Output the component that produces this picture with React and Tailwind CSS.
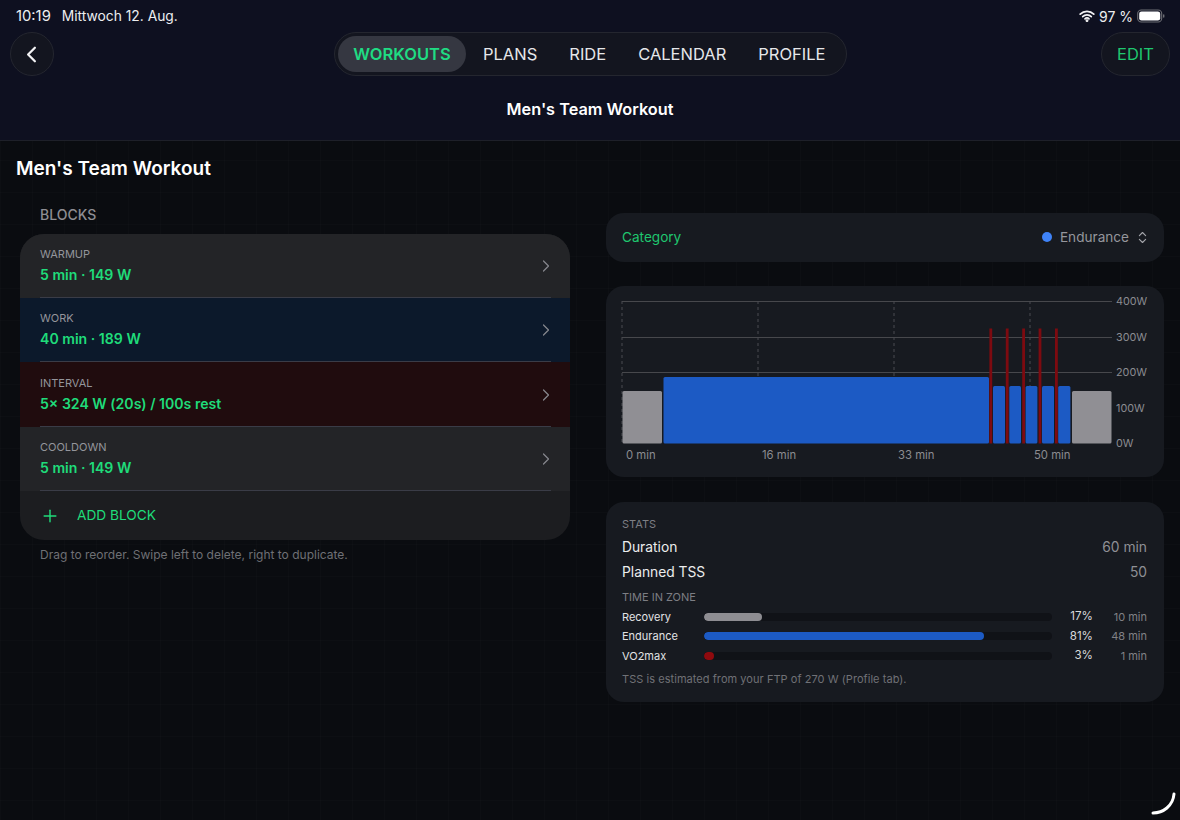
import React from "react";
import { ChevronLeft, ChevronRight, ChevronsUpDown, Plus } from "lucide-react";

const rows = [
  { label: "WARMUP", value: "5 min · 149 W", bg: "bg-[#232427]", h: "h-[64px]" },
  { label: "WORK", value: "40 min · 189 W", bg: "bg-[#0c192b]", h: "h-[64px]" },
  { label: "INTERVAL", value: "5× 324 W (20s) / 100s rest", bg: "bg-[#200c0e]", h: "h-[65px]" },
  { label: "COOLDOWN", value: "5 min · 149 W", bg: "bg-[#232427]", h: "h-[64px]" },
];

const tabs = ["WORKOUTS", "PLANS", "RIDE", "CALENDAR", "PROFILE"];

const zones = [
  { name: "Recovery", w: "w-[58px]", color: "bg-[#8e8d92]", pct: "17%", min: "10 min" },
  { name: "Endurance", w: "w-[280px]", color: "bg-[#1c5ac4]", pct: "81%", min: "48 min" },
  { name: "VO2max", w: "w-[10px]", color: "bg-[#8f0a0e]", pct: "3%", min: "1 min" },
];

function Chart() {
  const ox = 616;
  const oy = 292;
  const X = (x) => x - ox;
  const Y = (y) => y - oy;
  const blues = [[993, 1005], [1009.3, 1021], [1025.6, 1037.4], [1042, 1054], [1058.2, 1070.4]];
  const reds = [989.4, 1005.8, 1022.2, 1038.6, 1055];
  return (
    <svg width="548" height="176" viewBox="0 0 548 176" className="block">
      {[301, 337, 372].map((y) => (
        <line key={y} x1={X(622)} x2={X(1112)} y1={Y(y) + 0.5} y2={Y(y) + 0.5} stroke="#47484c" strokeWidth="1" />
      ))}
      {[622, 758, 894, 1030].map((x) => (
        <line key={x} x1={X(x)} x2={X(x)} y1={Y(301)} y2={Y(443)} stroke="#4a4b50" strokeWidth="1" strokeDasharray="3 3" />
      ))}
      <rect x={X(622.5)} y={Y(391)} width="39.5" height="52.5" rx="1.5" fill="#908f94" />
      <rect x={X(663.5)} y={Y(377)} width="325.5" height="66.5" rx="1.5" fill="#1c5ac4" />
      {blues.map(([a, b]) => (
        <rect key={a} x={X(a)} y={Y(386)} width={b - a} height="57.5" rx="1.5" fill="#1c5ac4" />
      ))}
      {reds.map((x) => (
        <rect key={x} x={X(x)} y={Y(328.5)} width="2.8" height="115" fill="#7d0a10" />
      ))}
      <rect x={X(1072)} y={Y(391)} width="39.5" height="52.5" rx="1.5" fill="#908f94" />
      {[["400W", 301], ["300W", 337], ["200W", 372], ["100W", 408], ["0W", 443]].map(([t, y]) => (
        <text key={t} x={X(1116)} y={Y(y) + 4} fontSize="10.8" fill="#8b8c91" fontFamily="Inter, sans-serif">{t}</text>
      ))}
      {[["0 min", 626], ["16 min", 762], ["33 min", 898], ["50 min", 1034]].map(([t, x]) => (
        <text key={t} x={X(x)} y={Y(458.5)} fontSize="11.3" fill="#8b8c91" fontFamily="Inter, sans-serif">{t}</text>
      ))}
    </svg>
  );
}

export default function App() {
  return (
    <div className="relative w-[1180px] h-[820px] overflow-hidden bg-[#0a0c10] font-['Inter',sans-serif] bg-[linear-gradient(rgba(255,255,255,0.012)_1px,transparent_1px),linear-gradient(90deg,rgba(255,255,255,0.012)_1px,transparent_1px)] bg-[size:32px_32px]">
      <header className="h-[141px] bg-[#0e1020] border-b border-[#1e2029] flex flex-col">
        <div className="h-[32px] flex items-center justify-between pl-[16px] pr-[15px] text-[#eceef0]">
          <div className="flex items-center gap-[11px]">
            <span className="text-[14.8px]">10:19</span>
            <span className="text-[13.8px]">Mittwoch 12. Aug.</span>
          </div>
          <div className="flex items-center gap-[4px] text-[14px]">
            <svg width="16" height="12" viewBox="0 0 16 12" fill="none" stroke="#f2f2f4" strokeWidth="1.7" strokeLinecap="round">
              <path d="M1.2 4.2a9.6 9.6 0 0 1 13.6 0" />
              <path d="M3.7 6.6a6 6 0 0 1 8.6 0" />
              <path d="M6 8.8a2.8 2.8 0 0 1 4 0" />
              <circle cx="8" cy="10.6" r="0.6" fill="#f2f2f4" />
            </svg>
            <span>97 %</span>
            <svg width="28" height="14" viewBox="0 0 28 14">
              <rect x="0.7" y="1" width="24" height="12" rx="3.6" fill="none" stroke="#6d6e74" strokeWidth="1.1" />
              <rect x="2.2" y="2.5" width="21" height="9" rx="2.3" fill="#ffffff" />
              <rect x="26" y="5.2" width="1.4" height="3.6" rx="0.7" fill="#6d6e74" />
            </svg>
          </div>
        </div>
        <div className="h-[44px] flex items-center justify-between pl-[10px] pr-[10px]">
          <button className="w-[44px] h-[44px] rounded-full bg-[#13151f] border border-[#24262f] flex items-center justify-center text-[#f2f2f4]">
            <ChevronLeft size={27} strokeWidth={2} className="-ml-[1px]" />
          </button>
          <nav className="h-[44px] w-[513px] ml-[26px] rounded-full bg-[#13151f] border border-[#24262f] flex items-center pl-[3px] text-[16.5px] text-[#e6e7ea]">
            {tabs.map((t, i) =>
              i === 0 ? (
                <span key={t} className="h-[36px] w-[128px] mr-[1px] pt-[1px] rounded-full bg-[#353741] flex items-center justify-center font-semibold text-[#1fdc83]">{t}</span>
              ) : (
                <span key={t} className="px-[16px] pt-[1px]">{t}</span>
              )
            )}
          </nav>
          <button className="w-[69px] h-[44px] pt-[1px] rounded-full bg-[#13151f] border border-[#24262f] text-[16.5px] text-[#1fc76f]">EDIT</button>
        </div>
        <h1 className="mt-[21px] text-center text-[16.3px] leading-[24px] font-semibold text-white">Men's Team Workout</h1>
      </header>

      <main className="pl-[16px]">
        <h2 className="mt-[15px] text-[19px] leading-[26px] font-semibold text-white">Men's Team Workout</h2>
        <div className="flex mt-[24px]">
          <section className="w-[554px] ml-[4px]">
            <div className="pl-[20px] h-[19px] -mt-[1px] text-[14px] leading-[19px] font-medium text-[#8e8e93]">BLOCKS</div>
            <div className="mt-[10px] w-[550px] rounded-[24px] overflow-hidden bg-[#1c1d20]">
              {rows.map((r) => (
                <div key={r.label} className={`relative ${r.bg} ${r.h} pl-[20px] pr-[14px] flex items-center justify-between`}>
                  <div>
                    <div className="text-[11px] leading-[14px] text-[#94959b]">{r.label}</div>
                    <div className="mt-[4px] text-[14.1px] leading-[20px] font-semibold text-[#1fdc7a]">{r.value}</div>
                  </div>
                  <ChevronRight size={20} strokeWidth={1.5} className="text-[#85868c]" />
                  <div className="absolute left-[20px] right-[19px] bottom-0 h-[1px] bg-[#3a3c47]" />
                </div>
              ))}
              <div className="h-[49px] pl-[20px] flex items-center">
                <Plus size={20} strokeWidth={1.7} className="text-[#1fdc7a]" />
                <span className="ml-[17px] text-[13.7px] text-[#1fdc7a]">ADD BLOCK</span>
              </div>
            </div>
            <p className="mt-[7px] pl-[20px] text-[12px] leading-[16px] text-[#6f7075]">Drag to reorder. Swipe left to delete, right to duplicate.</p>
          </section>

          <section className="ml-[32px] w-[558px] mt-[7px]">
            <div className="h-[49px] rounded-[18px] bg-[#171a20] pl-[16px] pr-[14px] flex items-center justify-between">
              <span className="text-[13.6px] text-[#1fc76f]">Category</span>
              <div className="flex items-center">
                <span className="w-[10px] h-[10px] rounded-full bg-[#3f83f8]" />
                <span className="ml-[8px] text-[13.6px] text-[#95969c]">Endurance</span>
                <ChevronsUpDown size={15} strokeWidth={1.8} className="ml-[6px] text-[#a4a5aa]" />
              </div>
            </div>

            <div className="mt-[24px] h-[191px] rounded-[18px] bg-[#171a20] pt-[6px] pl-[10px]">
              <Chart />
            </div>

            <div className="mt-[25px] h-[200px] rounded-[18px] bg-[#171a20] pl-[16px] pr-[17px] pt-[15px]">
              <div className="text-[11px] leading-[14px] text-[#7d7e84]">STATS</div>
              <div className="mt-[4px] h-[25px] flex items-center justify-between text-[13.8px]">
                <span className="text-[#eceded]">Duration</span>
                <span className="text-[#8f9095]">60 min</span>
              </div>
              <div className="h-[25px] flex items-center justify-between text-[13.8px]">
                <span className="text-[#eceded]">Planned TSS</span>
                <span className="text-[#8f9095]">50</span>
              </div>
              <div className="mt-[5px] text-[11px] leading-[14px] text-[#7d7e84]">TIME IN ZONE</div>
              <div className="mt-[3px]">
                {zones.map((z) => (
                  <div key={z.name} className="h-[19.5px] flex items-center text-[11px]">
                    <span className="w-[82px] text-[#e2e3e5]">{z.name}</span>
                    <div className="w-[348px] h-[8px] rounded-full bg-[#101217] overflow-hidden">
                      <div className={`h-full rounded-full ${z.w} ${z.color}`} />
                    </div>
                    <span className="w-[41px] text-right text-[11.6px] text-[#d8d9db]">{z.pct}</span>
                    <span className="flex-1 text-right text-[#808186]">{z.min}</span>
                  </div>
                ))}
              </div>
              <p className="mt-[6px] text-[11px] leading-[14px] tracking-[0.05px] text-[#707176]">TSS is estimated from your FTP of 270 W (Profile tab).</p>
            </div>
          </section>
        </div>
      </main>

      <svg width="26" height="24" viewBox="0 0 26 24" fill="none" className="absolute left-[1151px] bottom-[4px]">
        <path d="M2 21C12 21 22 14 23 2" stroke="#ffffff" strokeWidth="3" strokeLinecap="round" />
      </svg>
    </div>
  );
}
